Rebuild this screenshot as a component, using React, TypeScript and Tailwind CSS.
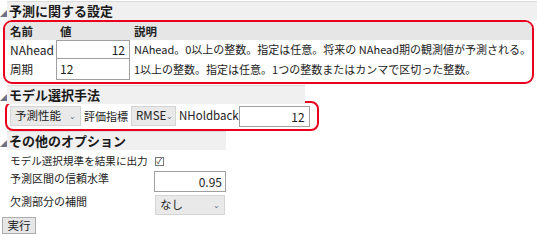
import React from 'react';

const font = { fontFamily: '"Noto Sans CJK JP", "Noto Sans", sans-serif' };

const Header: React.FC<{ title: string; width: string }> = ({ title, width }) => (
  <div className="flex items-end">
    <span className="w-[7px] shrink-0 text-[7px] leading-none text-gray-500 mb-[3px]">◢</span>
    <div className={`${width} shrink-0 h-[19px] bg-[#f0f0f0] border-t border-[#dcdcdc] text-[13px] font-bold leading-[18px] pl-[2px] text-[#1a1a1a]`}>
      {title}
    </div>
  </div>
);

const Select: React.FC<{ value: string; className: string }> = ({ value, className }) => (
  <div className={`${className} shrink-0 flex items-center justify-between bg-[#e9e9e9] border border-[#d4d4d4] px-[4px]`}>
    <span>{value}</span>
    <span className="text-[8px] text-gray-500">⌄</span>
  </div>
);

export default function App() {
  return (
    <div className="w-[537px] h-[237px] bg-white text-[11.5px] text-[#222] overflow-hidden pt-[1px]" style={font}>
      <Header title="予測に関する設定" width="w-[530px]" />

      <div className="mx-[3px] h-[64px] border-2 border-[#e8001c] rounded-[9px] overflow-hidden">
        <div className="flex h-[18px] bg-[#e6e6e6] font-bold leading-[18px]">
          <div className="w-[51px] shrink-0 pl-[5px]">名前</div>
          <div className="w-[74px] shrink-0 pl-[4px]">値</div>
          <div className="pl-[4px]">説明</div>
        </div>
        <div className="flex h-[19px] leading-[19px]">
          <div className="w-[51px] shrink-0 pl-[5px] text-[12px]">NAhead</div>
          <div className="w-[74px] shrink-0 border border-[#a0a0a0] bg-white text-right pr-[4px] leading-[17px] text-[12px]">12</div>
          <div className="pl-[4px] whitespace-nowrap text-[11px]">NAhead。0以上の整数。指定は任意。将来の NAhead期の観測値が予測される。</div>
        </div>
        <div className="flex h-[21px] leading-[21px]">
          <div className="w-[51px] shrink-0 pl-[5px]">周期</div>
          <div className="w-[74px] shrink-0 border border-[#a0a0a0] border-t-0 bg-white pl-[3px] leading-[20px] text-[12px]">12</div>
          <div className="pl-[4px] whitespace-nowrap text-[11px]">1以上の整数。指定は任意。1つの整数またはカンマで区切った整数。</div>
        </div>
      </div>

      <div className="mt-[1px]">
        <Header title="モデル選択手法" width="w-[298px]" />
      </div>
      <div className="ml-[5px] w-[314px] h-[30px] -mt-[3px] border-2 border-[#e8001c] rounded-[8px] flex items-center pl-[3px] gap-[3px]">
        <Select value="予測性能" className="w-[71px] h-[20px]" />
        <span className="text-[11px]">評価指標</span>
        <Select value="RMSE" className="w-[45px] h-[20px]" />
        <span className="text-[11.5px]">NHoldback</span>
        <div className="w-[71px] shrink-0 h-[21px] border border-[#a0a0a0] bg-white text-right pr-[4px] leading-[19px] -ml-[3px] text-[12px]">12</div>
      </div>

      <Header title="その他のオプション" width="w-[219px]" />
      <div className="pl-[10px] pt-[2px] flex flex-col">
        <div className="flex items-center h-[18px] gap-[7px]">
          <span className="text-[10.6px]">モデル選択規準を結果に出力</span>
          <span className="w-[9px] h-[9px] border border-[#777] flex items-center justify-center text-[8px] leading-none">✓</span>
        </div>
        <div className="flex items-center h-[23px]">
          <span className="w-[144px] shrink-0 self-start text-[11px]">予測区間の信頼水準</span>
          <div className="w-[72px] shrink-0 h-[21px] border border-[#a0a0a0] bg-white text-right pr-[3px] leading-[19px] text-[12px]">0.95</div>
        </div>
        <div className="flex items-center h-[23px]">
          <span className="w-[145px] shrink-0 self-start text-[11px]">欠測部分の補間</span>
          <Select value="なし" className="w-[70px] h-[20px]" />
        </div>
      </div>
      <div className="ml-[2px] mt-[1px] w-[34px] h-[17px] bg-[#e6e6e6] border border-[#adadad] text-center leading-[15px]">実行</div>
    </div>
  );
}
